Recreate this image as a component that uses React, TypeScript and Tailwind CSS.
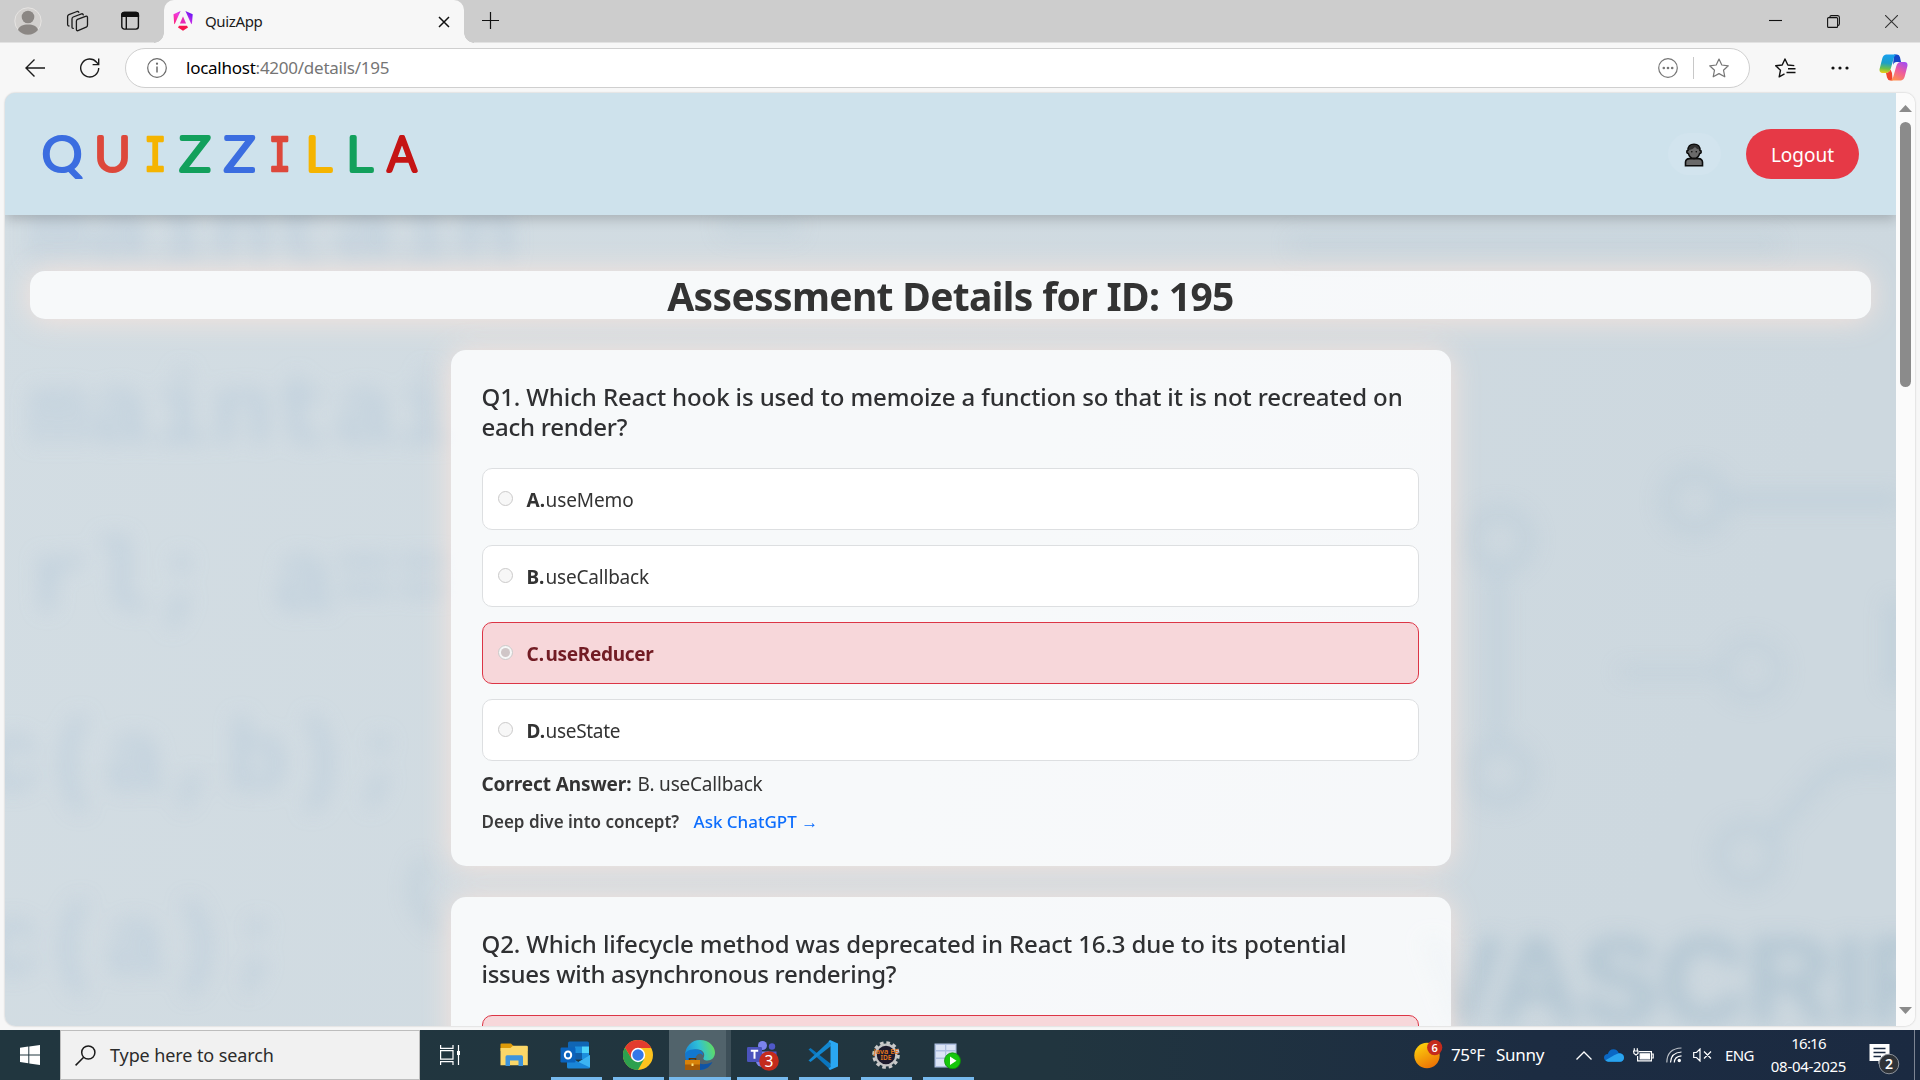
import type { ReactNode } from "react";

type Option = { key: string; text: string; wrong?: boolean; tracking: string };
type Question = { lines: { text: string; tracking: string }[]; options: Option[]; answer: string };

const questions: Question[] = [
  {
    lines: [
      { text: "Q1. Which React hook is used to memoize a function so that it is not recreated on", tracking: "tracking-[-0.11px]" },
      { text: "each render?", tracking: "tracking-[-0.25px]" },
    ],
    options: [
      { key: "A", text: "useMemo", tracking: "tracking-[-0.1px]" },
      { key: "B", text: "useCallback", tracking: "tracking-[-0.2px]" },
      { key: "C", text: "useReducer", wrong: true, tracking: "tracking-[-0.3px]" },
      { key: "D", text: "useState", tracking: "tracking-[-0.3px]" },
    ],
    answer: "B. useCallback",
  },
  {
    lines: [
      { text: "Q2. Which lifecycle method was deprecated in React 16.3 due to its potential", tracking: "tracking-[-0.11px]" },
      { text: "issues with asynchronous rendering?", tracking: "tracking-[-0.27px]" },
    ],
    options: [{ key: "", text: "", wrong: true, tracking: "tracking-normal" }],
    answer: "",
  },
];

/* ---------- browser chrome ---------- */

function AngularLogo() {
  return (
    <svg width="20" height="20" viewBox="0 0 20 20">
      <defs>
        <linearGradient id="ng" x1="0" y1="1" x2="1" y2="0.3">
          <stop offset="0" stopColor="#ff1f6b" />
          <stop offset="0.5" stopColor="#f13be0" />
          <stop offset="1" stopColor="#6a14f5" />
        </linearGradient>
      </defs>
      <path d="M0.5 3.2 7.6 0 2 12.5 1.2 13.2ZM12.4 0 19.7 3.2 18.9 13.2 17.9 12.3Z" fill="url(#ng)" />
      <path d="M10 5.4 13.1 12.6H6.9Z" fill="#e629b6" />
      <path d="M6 14.8H14L15 16.6 10 19.8 5 16.6Z" fill="#f8124d" />
    </svg>
  );
}

function TabStrip() {
  return (
    <div className="flex h-[43px] shrink-0 items-stretch border-b border-[#e2e2e2] bg-[#cdcdcd]">
      <div className="flex w-[164px] items-center pl-[14px]">
        <svg width="28" height="28" viewBox="0 0 28 28">
          <circle cx="14" cy="14" r="13.2" fill="#d2d0ce" stroke="#e6e4e2" />
          <circle cx="14" cy="10" r="6.3" fill="#8b8784" />
          <path d="M4 23C5 19 9 17.5 14 17.5S23 19 24 23A13 13 0 0 1 4 23Z" fill="#8b8784" />
        </svg>
        <svg className="ml-[24px]" width="23" height="23" viewBox="0 0 23 23" fill="none" stroke="#1b1b1b" strokeWidth="1.3" strokeLinejoin="round" strokeLinecap="round">
          <path d="M11.5 9.3 19.5 6.3Q21.5 5.8 21.5 7.6V15Q21.5 16.5 20.2 17.2L12 20.7Q10.4 21 10.4 19.3V11Q10.4 9.8 11.5 9.3Z" />
          <path d="M7.3 18.4Q6 18.6 6 17V9Q6 7.6 7.2 7L15.5 3.8Q17 3.5 17.3 4.8" />
          <path d="M3 16Q1.6 16 1.6 14.5V6.6Q1.6 5.2 2.9 4.7L11 1.5Q12.4 1.2 12.8 2.3" />
        </svg>
        <svg className="ml-[31px]" width="20" height="20" viewBox="0 0 20 20" fill="none" stroke="#111" strokeWidth="1.4">
          <rect x="1.8" y="1.5" width="16.6" height="16.6" rx="2.5" />
          <path d="M1.8 5.2V3.5Q2 1.5 4 1.5H16.4Q18.2 1.5 18.4 3.5V5.2Z" fill="#111" />
          <path d="M6.3 5V18" />
        </svg>
      </div>
      <div className="relative -mb-px flex w-[300px] items-center rounded-t-[10px] bg-[#f7f7f7] pb-[2px] pl-[9px]">
        <span className="absolute bottom-0 -left-[10px] size-[10px] bg-[radial-gradient(circle_at_0_0,#cdcdcd_9.5px,#f7f7f7_10px)]" />
        <span className="absolute -right-[10px] bottom-0 size-[10px] bg-[radial-gradient(circle_at_100%_0,#cdcdcd_9.5px,#f7f7f7_10px)]" />
        <AngularLogo />
        <span className="ml-[12px] text-[15px] leading-5 tracking-[-0.35px] text-[#1b1b1b]">QuizApp</span>
        <svg className="mt-[2px] mr-[14px] ml-auto" width="12" height="12" viewBox="0 0 12 12" stroke="#111" strokeWidth="1.5">
          <path d="M1 1 11 11M11 1 1 11" />
        </svg>
      </div>
      <svg className="mt-[12px] ml-[18px]" width="17" height="17" viewBox="0 0 17 17" stroke="#111" strokeWidth="1.2">
        <path d="M8.5 0V17M0 8.5H17" />
      </svg>
      <div className="mr-[22px] ml-auto flex items-center gap-[45px]">
        <svg width="13" height="13" viewBox="0 0 13 13" stroke="#111" strokeWidth="1.1"><path d="M0 5.5H13" /></svg>
        <svg width="13" height="13" viewBox="0 0 13 13" fill="none" stroke="#111" strokeWidth="1.1">
          <rect x="0.6" y="2.6" width="10" height="9.8" rx="1" />
          <path d="M2.8 2.2Q2.9 0.6 4.3 0.6H10.8Q12.4 0.7 12.4 2.4V8.6Q12.3 10.4 11 10.5" />
        </svg>
        <svg width="13" height="13" viewBox="0 0 13 13" stroke="#333" strokeWidth="1.1"><path d="M0 0 13 13M13 0 0 13" /></svg>
      </div>
    </div>
  );
}

const STAR = "M10 1 12.8 7 19.3 7.8 14.5 12.2 15.8 18.8 10 15.6 4.2 18.8 5.5 12.2 0.7 7.8 7.2 7Z";

function Toolbar() {
  return (
    <div className="flex h-[50px] shrink-0 items-center bg-[#f7f7f7] pb-[1px]">
      <svg className="ml-[25px]" width="20" height="18" viewBox="0 0 20 18" fill="none" stroke="#1b1b1b" strokeWidth="1.4">
        <path d="M20 9H1M9.5 0.5 1 9 9.5 17.5" />
      </svg>
      <svg className="ml-[35px]" width="20" height="20" viewBox="0 0 20 20" fill="none" stroke="#1b1b1b" strokeWidth="1.4">
        <path d="M18.7 10A9 9 0 1 1 16.6 4.2L18.6 6.4M18.7 0.5V6.6H12.6" />
      </svg>
      <div className="ml-[25px] flex h-[40px] w-[1625px] items-center rounded-full border border-[#cfcfcf] bg-white pl-[21px]">
        <svg width="20" height="20" viewBox="0 0 20 20" fill="none" stroke="#6b6b6b" strokeWidth="1.2">
          <circle cx="10" cy="10" r="9.3" />
          <path d="M10 8.5V14.5" strokeWidth="1.5" />
          <circle cx="10" cy="5.7" r="0.5" fill="#6b6b6b" />
        </svg>
        <span className="ml-[19px] text-[17px] leading-6 tracking-[-0.25px] text-[#757575]">
          <span className="text-black">localhost</span>:4200/details/195
        </span>
        <svg className="ml-auto" width="20" height="20" viewBox="0 0 20 20" fill="none" stroke="#767676" strokeWidth="1.2">
          <circle cx="10" cy="10" r="9.3" />
          <g fill="#767676" stroke="none">
            <circle cx="5.8" cy="10" r="1.3" />
            <circle cx="10" cy="10" r="1.3" />
            <circle cx="14.2" cy="10" r="1.3" />
          </g>
        </svg>
        <span className="mx-[15px] h-[22px] w-px bg-[#c8c8c8]" />
        <svg className="mr-[20px]" width="20" height="20" viewBox="0 0 20 20" fill="none" stroke="#767676" strokeWidth="1.2" strokeLinejoin="round">
          <path d={STAR} />
        </svg>
      </div>
      <svg className="ml-[25px]" width="21" height="20" viewBox="0 0 21 20" fill="none" stroke="#111" strokeWidth="1.4" strokeLinejoin="round">
        <path d="M19.3 7.6 12.8 7 10 1 7.2 7 0.7 7.8 5.5 12.2 4.2 18.8 9.5 15.9" />
        <path d="M13 10.8H20.5M11.5 14.6H20.5" strokeWidth="1.5" />
      </svg>
      <svg className="ml-[35px]" width="18" height="4" viewBox="0 0 18 4" fill="#111">
        <circle cx="2" cy="2" r="1.6" />
        <circle cx="9" cy="2" r="1.6" />
        <circle cx="16" cy="2" r="1.6" />
      </svg>
      <svg className="ml-[30px]" width="29" height="27" viewBox="0 0 29 27">
        <defs>
          <linearGradient id="cpA" x1="0.3" y1="0" x2="0.2" y2="1">
            <stop offset="0" stopColor="#18a0ee" />
            <stop offset="0.45" stopColor="#1c9fc9" />
            <stop offset="0.75" stopColor="#6cc04a" />
            <stop offset="1" stopColor="#f2cf16" />
          </linearGradient>
          <linearGradient id="cpB" x1="0.8" y1="0" x2="0.3" y2="1">
            <stop offset="0" stopColor="#a44cf0" />
            <stop offset="0.5" stopColor="#ee5c9c" />
            <stop offset="1" stopColor="#ff8f4f" />
          </linearGradient>
        </defs>
        <path d="M15 0.5H18Q20.4 0.7 21 3.3L22 8H17.5Q15 8 14 11Z" fill="#1446c8" />
        <path d="M7 0.5H17.5Q15.5 1.2 14.8 4L11.8 14.5Q10.6 18.6 7.5 19H3.5Q-0.3 18.8 0.7 14.5L3.2 4.8Q4.2 1 7 0.5Z" fill="url(#cpA)" />
        <path d="M7 19Q10.2 19 11.5 15.6L13 19 13.6 26.5H11.3Q8.7 26.3 8 23.6Z" fill="#f0442e" />
        <path d="M22 26.5H11.5Q13.5 25.8 14.2 23L17.2 12.5Q18.4 8.2 21.5 8H25.5Q29.3 8.2 28.3 12.5L25.8 22.2Q24.8 26 22 26.5Z" fill="url(#cpB)" />
      </svg>
    </div>
  );
}

/* ---------- page ---------- */

function Backdrop() {
  return (
    <svg aria-hidden="true" className="absolute inset-0" width="1891" height="933" viewBox="5 93 1891 933">
      <defs>
        <filter id="soft" x="-20%" y="-40%" width="140%" height="180%">
          <feGaussianBlur stdDeviation="10" />
        </filter>
        <linearGradient id="sky" x1="0" y1="0" x2="1" y2="0.2">
          <stop offset="0" stopColor="#d3dde3" />
          <stop offset="1" stopColor="#cdd8df" />
        </linearGradient>
      </defs>
      <rect x="5" y="93" width="1891" height="933" fill="url(#sky)" />
      <g filter="url(#soft)" fill="#bccddb" opacity="0.72" fontFamily="Liberation Mono, monospace" fontWeight="700" fontSize="102">
        <text x="28" y="262">maintain</text>
        <text x="28" y="443">maintai</text>
        <text x="28" y="610">rl; a==</text>
        <text x="-18" y="790">c(a,b);</text>
        <text x="-18" y="974">c(a);</text>
      </g>
      <g filter="url(#soft)" fill="none" stroke="#b9cbd8" strokeWidth="14" opacity="0.55">
        <circle cx="1695" cy="501" r="28" />
        <path d="M1724 500H1900" strokeWidth="16" />
        <circle cx="1500" cy="540" r="28" />
        <path d="M1497 572V745" />
        <circle cx="1500" cy="773" r="28" />
        <circle cx="1752" cy="670" r="28" strokeWidth="9" />
        <path d="M1620 672H1722" strokeWidth="10" />
        <circle cx="1747" cy="855" r="28" />
        <path d="M1770 835 1820 780Q1835 765 1860 765H1900" />
        <path d="M1290 245H1780" strokeWidth="22" opacity="0.5" />
        <path d="M720 225H800" strokeWidth="26" opacity="0.5" />
        <path d="M440 930Q400 900 425 860" />
        <path d="M1895 600V690" strokeWidth="20" />
      </g>
      <text x="1422" y="1022" filter="url(#soft)" fill="#b0c4d1" stroke="#b0c4d1" strokeWidth="3" opacity="0.85" fontFamily="Liberation Sans, sans-serif" fontWeight="700" fontSize="120">
        VASCRIP
      </text>
    </svg>
  );
}

const wordmark = [
  { ch: "Q", x: 42, w: 40, color: "#3b6de0" },
  { ch: "U", x: 94.5, w: 36, color: "#dd483b" },
  { ch: "I", x: 144, w: 22.5, color: "#f5b400" },
  { ch: "Z", x: 179.5, w: 31, color: "#12a05c" },
  { ch: "Z", x: 224, w: 31, color: "#3b6de0" },
  { ch: "I", x: 268.5, w: 22.5, color: "#dd483b" },
  { ch: "L", x: 305.5, w: 26, color: "#f5b400" },
  { ch: "L", x: 346.5, w: 26, color: "#12a05c" },
  { ch: "A", x: 387.5, w: 29, color: "#c51414" },
];

function Wordmark() {
  return (
    <svg width="390" height="50" viewBox="39 129 390 50" strokeLinejoin="round" strokeLinecap="round">
      {wordmark.map((l, i) => (
        <text
          key={i}
          x={l.x}
          y="170.5"
          fill={l.color}
          stroke={l.color}
          strokeWidth={l.ch === "I" ? 2.6 : 4}
          fontFamily={l.ch === "I" ? "DejaVu Sans Mono, monospace" : "Lato, sans-serif"}
          fontWeight={l.ch === "I" ? 400 : 300}
          fontSize="47"
          textLength={l.w}
          lengthAdjust="spacingAndGlyphs"
        >
          {l.ch}
        </text>
      ))}
    </svg>
  );
}

function SiteHeader() {
  return (
    <header className="relative z-10 flex h-[122px] shrink-0 items-center bg-[#cee2ec] pr-[37px] pl-[34px] shadow-[0_4px_12px_rgba(0,0,0,0.2)]">
      <Wordmark />
      <div className="ml-auto flex h-[42px] w-[53px] items-center justify-center rounded-full bg-[#d2e4ee] pt-px pr-px">
        <svg width="20" height="24" viewBox="0 0 20 24" stroke="#0c0c0c" strokeWidth="1.6">
          <path d="M1.5 22.8V19Q1.8 15.8 5.5 15.6H14.5Q18.2 15.8 18.5 19V22.8Z" fill="#6a6a6a" />
          <path d="M10 1.2Q16 1.4 16 7.4 17.4 7.6 17.2 9.2 17 10.6 15.6 10.6 14.4 15.3 10 15.4 5.6 15.3 4.4 10.6 3 10.6 2.8 9.2 2.6 7.6 4 7.4 4 1.4 10 1.2Z" fill="#6a6a6a" />
          <path d="M4.5 7.2Q4.6 2 10 1.8 15.4 2 15.5 6.8 12.5 6 11 3.9 8.4 7 4.5 7.2Z" fill="#2f2f2f" stroke="none" />
          <circle cx="7.8" cy="8.8" r="0.8" fill="#0c0c0c" stroke="none" />
          <circle cx="12.3" cy="8.8" r="0.8" fill="#0c0c0c" stroke="none" />
        </svg>
      </div>
      <button className="ml-[25px] flex h-[50px] w-[113px] items-center justify-center rounded-full bg-[#e63946] pt-[2px] text-[19px] text-white">
        Logout
      </button>
    </header>
  );
}

function OptionRow({ option }: { option: Option }) {
  return (
    <li
      className={
        option.wrong
          ? "flex h-[62px] items-center rounded-[10px] border border-[#dc3545] bg-[#f7d7da] pl-[15px] text-[#721c24]"
          : "flex h-[62px] items-center rounded-[10px] border border-[#dddfe1] bg-white pl-[15px] text-[#333]"
      }
    >
      <span className="mb-[2px] flex size-[15px] items-center justify-center rounded-full border border-[#cbcaca] bg-[#f7f7f7]">
        {option.wrong && <span className="size-[9px] rounded-full bg-[#d0c6c7]" />}
      </span>
      {option.text && (
        <span className="mt-px ml-[14px] flex text-[19px] leading-6">
          <b className="w-[19px] font-bold">{option.key}.</b>
          <span className={(option.wrong ? "font-bold " : "font-normal ") + option.tracking}>{option.text}</span>
        </span>
      )}
    </li>
  );
}

function QuestionCard({ question }: { question: Question }) {
  return (
    <section className="h-[516px] w-[1000px] shrink-0 rounded-[15px] bg-white/82 pr-[32px] pl-[31px] pt-[32px] shadow-[0_1px_30px_rgba(255,230,220,0.85)]">
      <h2 className="text-[24px] leading-[30px] font-medium text-[#2f3032]">
        {question.lines.map((l) => (
          <span key={l.text} className={"block whitespace-nowrap " + l.tracking}>
            {l.text}
          </span>
        ))}
      </h2>
      <ul className="mt-[26px] flex flex-col gap-[15px]">
        {question.options.map((o) => (
          <OptionRow key={o.key} option={o} />
        ))}
      </ul>
      {question.answer && (
        <>
          <p className="mt-[8px] text-[19px] leading-[30px] text-[#333]">
            <b className="tracking-[-0.1px]">Correct Answer:</b>
            <span className="ml-[6px] tracking-[-0.2px]">{question.answer}</span>
          </p>
          <p className="mt-[9px] flex text-[17px] leading-[28px]">
            <span className="w-[212px] font-semibold text-[#3c3c3c]">Deep dive into concept?</span>
            <a className="font-medium text-[#0d6efd]">Ask ChatGPT →</a>
          </p>
        </>
      )}
    </section>
  );
}

function Scrollbar() {
  return (
    <div className="flex w-[19px] shrink-0 flex-col items-center bg-[#fbfbfb] pt-[12px] pb-[12px]">
      <svg width="13" height="7" viewBox="0 0 13 7" fill="#8b8b8b"><path d="M6.5 0 13 7H0Z" /></svg>
      <div className="mt-[10px] h-[265px] w-[11px] rounded-full bg-[#8b8b8b]" />
      <svg className="mt-auto" width="13" height="7" viewBox="0 0 13 7" fill="#8b8b8b"><path d="M0 0H13L6.5 7Z" /></svg>
    </div>
  );
}

/* ---------- taskbar ---------- */

function TaskCell({ children, open, active }: { children: ReactNode; open?: boolean; active?: boolean }) {
  return (
    <div className={active ? "flex h-full w-[62px] flex-col items-center border-r-[5px] border-[#3d4f58] bg-[#51636b]" : "flex h-full w-[62px] flex-col items-center"}>
      <div className="flex flex-1 items-center pt-[3px]">{children}</div>
      <div className={active ? "-mr-[5px] h-[3px] w-[62px] bg-[#76b9ed]" : open ? "h-[3px] w-[51px] bg-[#76b9ed]" : "h-[3px] w-[51px]"} />
    </div>
  );
}

function TaskIcons() {
  return (
    <>
      <TaskCell>
        <svg width="28" height="24" viewBox="0 0 28 24">
          <path d="M0.5 1.5Q0.5 0.5 1.5 0.5H11L13.5 3H27.5V8H0.5Z" fill="#dd9a08" />
          <path d="M0.5 5H10.5L13 2.8H26.5Q27.8 2.8 27.8 4V22.3H0.5Z" fill="#fbd768" />
          <path d="M5.5 23V14Q5.5 12.3 7 12.3H21.5Q23 12.3 23 14V23H18.5V17.5H10V23Z" fill="#3d94dc" />
        </svg>
      </TaskCell>
      <TaskCell open>
        <svg className="mr-[2px]" width="30" height="28" viewBox="0 0 30 28">
          <rect x="8" y="0.5" width="21" height="18" rx="1.5" fill="#1066b5" />
          <path d="M15 5.5H22V12H15Z" fill="#1c8fdd" />
          <path d="M22 5.5H29V12H22Z" fill="#4fd4fb" />
          <path d="M15 12H22V18H15Z" fill="#0f5da8" />
          <path d="M22 12H29V18H22Z" fill="#1c8fdd" />
          <path d="M7 14 18.5 21 30 14V26Q30 27.5 28.5 27.5H8.5Q7 27.5 7 26Z" fill="#1a86d8" />
          <path d="M18.5 21 30 14V26.5Z" fill="#3cb4f2" />
          <rect x="0.5" y="6.5" width="15" height="15" rx="1.2" fill="#0a63bd" />
          <ellipse cx="8" cy="14" rx="3.2" ry="3.6" fill="none" stroke="#fff" strokeWidth="2" />
        </svg>
      </TaskCell>
      <TaskCell open>
        <svg width="30" height="30" viewBox="0 0 30 30">
          <circle cx="15" cy="15" r="15" fill="#fcc31e" />
          <path d="M2 7.5A15 15 0 0 0 15 30L21.3 18.7 8.7 18.7Z" fill="#2da04e" />
          <path d="M2 7.5 8.7 18.7 15 8H28.2A15 15 0 0 0 2 7.5Z" fill="#e33b2e" />
          <circle cx="15" cy="15" r="7.2" fill="#fff" />
          <circle cx="15" cy="15" r="5.7" fill="#3478e8" />
        </svg>
      </TaskCell>
      <TaskCell active>
        <svg className="ml-[4px]" width="30" height="30" viewBox="0 0 30 30">
          <defs>
            <linearGradient id="edA" x1="0" y1="0.6" x2="1" y2="0.4">
              <stop offset="0" stopColor="#1a8bd8" />
              <stop offset="0.5" stopColor="#30c0d6" />
              <stop offset="1" stopColor="#62de5e" />
            </linearGradient>
          </defs>
          <path d="M0 15A15 15 0 0 1 15 0C24 0 30 6.5 30 12.5 30 17.5 26.5 20.5 22.5 20.5 19 20.5 17.6 19 18.8 17.2 20.3 14.5 18.3 9.5 12.5 9.5 5 9.5 0 13 0 15Z" fill="url(#edA)" />
          <path d="M0 15C0 12 5 8.5 12 9.5 17 10.2 18.5 13.5 18 15.5 16 12 10.5 14 10.5 19 10.5 24 15 29 21 28.5A15 15 0 0 1 0 15Z" fill="#1278d0" />
          <path d="M10.5 19C11.5 23.5 17.5 26.5 27.5 22 25 27 20 30 15 30 9 29 9 22 10.5 19Z" fill="#0f54a5" />
          <path d="M4.5 20.5V18.7H10.5V20.5" fill="none" stroke="#5d3404" strokeWidth="1.6" />
          <rect x="0" y="20" width="15" height="10" fill="#d98209" />
          <rect x="0" y="24.5" width="15" height="5.5" fill="#a85b05" />
          <rect x="6.5" y="23.5" width="2" height="2.5" fill="#ffe27a" />
        </svg>
      </TaskCell>
      <TaskCell open>
        <svg className="mt-[2px] ml-[2px]" width="32" height="30" viewBox="0 0 32 30">
          <circle cx="15.5" cy="4.5" r="4.5" fill="#7b83eb" />
          <circle cx="25" cy="5.5" r="3.2" fill="#5059c9" />
          <path d="M20 10.5H29.5V18Q29 23 23 23Z" fill="#5059c9" />
          <path d="M9 10.5H22V19Q21 26 14.5 26 10 25 9 21Z" fill="#7b83eb" />
          <rect x="0" y="6" width="15" height="15" rx="1.2" fill="#4b53bc" />
          <path d="M3.8 9.7H11.2M7.5 9.7V17.8" stroke="#fff" strokeWidth="2" />
          <circle cx="22" cy="20" r="9.8" fill="#c42b1c" />
          <text x="22" y="25.6" textAnchor="middle" fill="#fff" fontSize="15.5">3</text>
        </svg>
      </TaskCell>
      <TaskCell open>
        <svg className="mr-[2px]" width="30" height="30" viewBox="0 0 30 30">
          <path d="M0.5 9.5 2.5 8 23 24 22 29.5Z" fill="#0a75bd" />
          <path d="M0.5 20.5 2.5 22 23 6 22 0.5Z" fill="#1387cf" />
          <path d="M22 0 30 3.5V26.5L22 30 20.5 28.5 22.5 27V3L20.5 1.5Z" fill="#2aa7f2" />
        </svg>
      </TaskCell>
      <TaskCell open>
        <svg className="mr-px" width="28" height="28" viewBox="0 0 28 28">
          <circle cx="14" cy="14" r="12.3" fill="none" stroke="#c9c9c9" strokeWidth="3" strokeDasharray="3.6 2.84" />
          <circle cx="14" cy="14" r="10.3" fill="#1d1a2c" stroke="#c4c4c4" strokeWidth="2.2" />
          <text x="14" y="13" textAnchor="middle" fill="#e8791c" fontSize="6.5" fontWeight="600" textLength="25" lengthAdjust="spacingAndGlyphs">Java EE</text>
          <text x="14" y="19" textAnchor="middle" fill="#e8791c" fontSize="6.5" fontWeight="600">IDE</text>
        </svg>
      </TaskCell>
      <TaskCell open>
        <svg className="mr-px" width="27" height="27" viewBox="0 0 27 27">
          <rect x="0.5" y="1.5" width="22" height="24" fill="#aebfe0" />
          <g fill="#dbe4f5">
            <rect x="2" y="3" width="9" height="5" />
            <rect x="12.3" y="3" width="9" height="5" />
            <rect x="2" y="9.5" width="9" height="6" />
            <rect x="12.3" y="9.5" width="9" height="6" />
            <rect x="2" y="17" width="9" height="7" />
          </g>
          <circle cx="18.5" cy="18.8" r="8" fill="#16c60c" stroke="#0c8f06" strokeWidth="0.8" />
          <path d="M16 14.5 22.5 18.8 16 23Z" fill="#fff" />
        </svg>
      </TaskCell>
    </>
  );
}

function Tray() {
  return (
    <div className="ml-auto flex h-full items-center text-white">
      <svg className="mb-[1px]" width="29" height="29" viewBox="0 0 29 29">
        <defs>
          <linearGradient id="sun" x1="0.2" y1="0" x2="0.7" y2="1">
            <stop offset="0" stopColor="#fdd30c" />
            <stop offset="1" stopColor="#ec7005" />
          </linearGradient>
        </defs>
        <circle cx="13" cy="15.5" r="12.7" fill="url(#sun)" />
        <circle cx="20.7" cy="7.6" r="7.6" fill="#c42b1c" />
        <text x="20.7" y="11.6" textAnchor="middle" fill="#fff" fontSize="11" fontWeight="600">6</text>
      </svg>
      <span className="ml-[8px] w-[45px] text-[17px] tracking-[-0.45px]">75°F</span>
      <span className="w-[80px] text-[17px] tracking-[-0.25px]">Sunny</span>
      <svg width="16" height="9" viewBox="0 0 16 9" fill="none" stroke="#fff" strokeWidth="1.3"><path d="M0.5 8.5 8 1 15.5 8.5" /></svg>
      <svg className="ml-[12px]" width="20" height="13" viewBox="0 0 20 13">
        <path d="M4 12.5Q0 12 0 8.5 0.2 5.3 3.8 5 5.2 0.3 9.5 0.2 13.3 0.3 14.8 4.2 19.6 4.2 20 8.5 19.8 12.5 16 12.7Z" fill="#0a67c4" />
        <path d="M1.5 11.2 10.5 6 14.8 4.2Q19.8 4.4 20 8.5 19.8 12.5 16 12.8H4.2Q2.3 12.5 1.5 11.2Z" fill="#2aa4ee" />
      </svg>
      <svg className="ml-[9px]" width="21" height="14" viewBox="0 0 21 14" fill="none" stroke="#fff" strokeWidth="1.2">
        <path d="M6 3.6H18.4V12.9H4.6V8M18.4 6H20.2V10H18.4" />
        <path d="M7.2 5.8H16.4V10.8H7.2Z" fill="#fff" />
        <path d="M1.3 0.3V3M4.3 0.3V3M0.5 3H5V5.5L3 7 1 5.5Z" />
      </svg>
      <svg className="ml-[12px]" width="16" height="16" viewBox="0 0 16 16" fill="none" stroke="#fff" strokeWidth="1.2">
        <path d="M0.8 15.5Q1 1.5 15.5 1" opacity="0.7" />
        <path d="M4.5 15.5Q5 5.5 15.5 5" />
        <path d="M8.3 15.5Q8.5 9.3 15.5 8.8" />
        <circle cx="13.3" cy="13.5" r="1.7" fill="#fff" stroke="none" />
      </svg>
      <svg className="ml-[11px]" width="19" height="14" viewBox="0 0 19 14" fill="none" stroke="#fff" strokeWidth="1.2">
        <path d="M0.7 4.5H3.5L7 1V13L3.5 9.5H0.7ZM11 3.5 18 10.5M18 3.5 11 10.5" />
      </svg>
      <span className="ml-[13px] w-[45px] text-[15px] tracking-[-0.6px]">ENG</span>
      <div className="flex w-[77px] flex-col items-center text-[15px] leading-[23px]">
        <span className="tracking-[-0.8px]">16:16</span>
        <span className="tracking-[-0.3px]">08-04-2025</span>
      </div>
      <svg className="mt-[10px] ml-[22px]" width="31" height="32" viewBox="0 0 31 32">
        <path d="M0.5 0H20.5V17H13L9.5 20V17H0.5Z" fill="#fff" />
        <path d="M4.5 4.5H16.5M4.5 8.5H16.5M4.5 12.5H12" stroke="#1b2a41" strokeWidth="1.3" />
        <circle cx="20" cy="20" r="9.8" fill="#2f3338" stroke="#8c929a" />
        <text x="20" y="25" textAnchor="middle" fill="#fff" fontSize="14" fontWeight="600">2</text>
      </svg>
      <span className="ml-[14px] h-full w-px bg-[#7d8593]" />
      <span className="w-[5px]" />
    </div>
  );
}

function Taskbar() {
  return (
    <footer className="flex h-[50px] shrink-0 items-center bg-[linear-gradient(90deg,#21363f_0%,#21353f_55%,#1c2c42_80%,#1b2a41_100%)]">
      <svg className="mx-[20px]" width="20" height="20" viewBox="0 0 20 20" fill="#fff">
        <path d="M0 2.8 8.3 1.6V9.4H0ZM9.3 1.4 20 0V9.4H9.3ZM0 10.4H8.3V18.3L0 17.1ZM9.3 10.4H20V20L9.3 18.5Z" />
      </svg>
      <div className="flex h-full w-[360px] items-center border border-[#bdbdbd] bg-[#f1f1f1] pl-[14px]">
        <svg width="21" height="21" viewBox="0 0 21 21" fill="none" stroke="#1a1a1a" strokeWidth="1.5">
          <circle cx="13.3" cy="7.5" r="6.6" />
          <path d="M8.7 12.3 0.6 20.4" />
        </svg>
        <span className="ml-[14px] pt-[1px] text-[18px] tracking-[-0.1px] text-[#2b2b2b]">Type here to search</span>
      </div>
      <svg className="mr-[23px] ml-[20px]" width="20" height="20" viewBox="0 0 20 20" fill="none" stroke="#fff" strokeWidth="1.2">
        <path d="M0.6 0V3.4H13V0M0.6 20V16.6H13V20M0.6 5.6H13V14.2H0.6ZM18.5 0V20" />
        <path d="M17 6H20V10H17Z" fill="#fff" stroke="none" />
      </svg>
      <TaskIcons />
      <Tray />
    </footer>
  );
}

export default function App() {
  return (
    <div className="flex h-[1080px] w-[1920px] flex-col overflow-hidden bg-[#f7f7f7] font-['Noto_Sans',sans-serif]">
      <TabStrip />
      <Toolbar />
      <div className="mr-[5px] mb-[4px] ml-[5px] flex h-[933px] shrink-0 overflow-hidden rounded-[10px] shadow-[0_0_2px_rgba(0,0,0,0.25)]">
        <main className="relative flex w-[1891px] flex-col overflow-hidden">
          <Backdrop />
          <SiteHeader />
          <div className="relative flex flex-col items-center px-[25px] pt-[56px]">
            <h1 className="flex h-[48px] w-full items-center justify-center rounded-[15px] bg-white/82 pt-[2px] text-[39px] font-bold tracking-[-0.66px] text-[#333] shadow-[0_1px_30px_rgba(255,230,220,0.85)]">
              Assessment Details for ID: 195
            </h1>
            <div className="mt-[31px] flex flex-col gap-[31px]">
              {questions.map((q, i) => (
                <QuestionCard key={i} question={q} />
              ))}
            </div>
          </div>
        </main>
        <Scrollbar />
      </div>
      <Taskbar />
    </div>
  );
}
